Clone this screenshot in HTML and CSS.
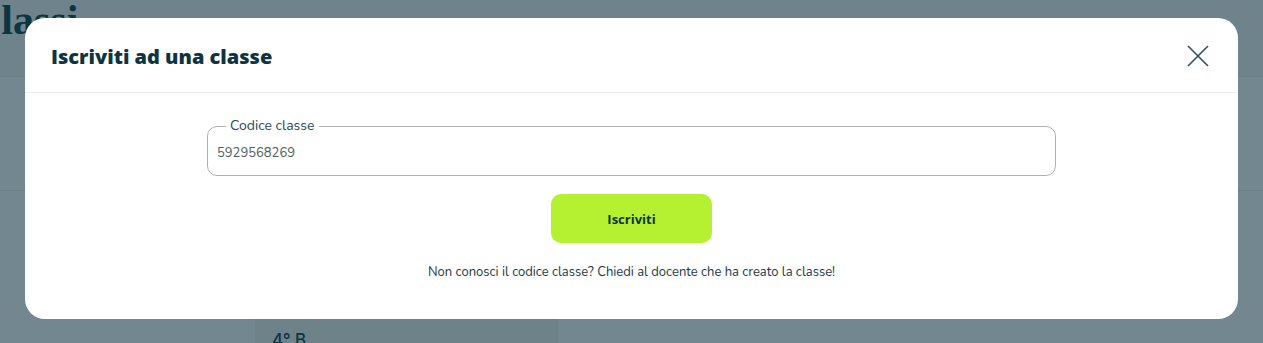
FILE: index.html
```html
<!DOCTYPE html>
<html lang="it">
<head>
<meta charset="utf-8">
<link rel="stylesheet" href="styles.css">
<title>Classi</title>
</head>
<body>
<div class="page">
  <header class="page-head">
    <h1 class="page-title">Classi</h1>
  </header>
  <div class="toolbar"></div>
  <div class="grid">
    <div class="class-card"><span class="class-name">4° B</span></div>
  </div>
</div>

<div class="modal">
  <div class="modal-head">
    <h2 class="modal-title">Iscriviti ad una classe</h2>
    <button class="close" aria-label="Chiudi">
      <svg width="24" height="24" viewBox="0 0 24 24"><path d="M2 2 L22 22 M22 2 L2 22" stroke="#2b4e5c" stroke-width="1.6" fill="none"/></svg>
    </button>
  </div>
  <div class="modal-body">
    <fieldset class="field">
      <legend class="field-label">Codice classe</legend>
      <div class="field-value">5929568269</div>
    </fieldset>
    <button class="submit">Iscriviti</button>
    <p class="help">Non conosci il codice classe? Chiedi al docente che ha creato la classe!</p>
  </div>
</div>
</body>
</html>
```
FILE: styles.css
```css
html, body {
  margin: 0;
  padding: 0;
}
body {
  background: #72878f;
  width: 1263px;
  height: 343px;
  overflow: hidden;
  position: relative;
  font-family: "Nunito", "Lato", "Noto Sans", sans-serif;
}
.page-head {
  height: 76px;
  background: #6e838b;
  border-bottom: 1px solid #6a7f87;
  overflow: hidden;
}
.page-title {
  margin: 0;
  font-family: "Liberation Serif", serif;
  font-weight: bold;
  font-size: 42px;
  color: #0d3441;
  line-height: 40px;
  margin-left: -29px;
  margin-top: 0px;
}
.toolbar {
  height: 113px;
  border-bottom: 1px solid #6a7f87;
}
.grid {
  padding: 128px 0 0 255px;
}
.class-card {
  width: 303px;
  height: 60px;
  background: #6d8289;
  box-sizing: border-box;
  padding: 11px 0 0 17px;
}
.class-name {
  font-family: "Inter", sans-serif;
  font-weight: 500;
  font-size: 17px;
  color: #0d3441;
}

.modal {
  position: absolute;
  left: 25px;
  top: 18px;
  width: 1213px;
  height: 301px;
  background: #fff;
  border-radius: 20px;
}
.modal-head {
  height: 74px;
  border-bottom: 1px solid #eef1f2;
  display: flex;
  align-items: center;
  justify-content: space-between;
  padding: 0 28px 0 26px;
}
.modal-title {
  margin: 0;
  margin-top: 2px;
  font-family: "Open Sans", sans-serif;
  font-weight: 800;
  font-size: 20px;
  color: #0d3441;
}
.close {
  border: 0;
  background: none;
  padding: 0;
  width: 24px;
  height: 24px;
  margin-top: 1px;
}
.close svg { display: block; }

.modal-body {
  display: flex;
  flex-direction: column;
  align-items: center;
  padding-top: 25px;
}
.field {
  width: 849px;
  box-sizing: border-box;
  margin: 0;
  height: 58px;
  border: 1px solid #aeb1b3;
  border-radius: 10px;
  padding: 0 9px;
}
.field-label {
  font-size: 14px;
  color: #1e4a5a;
  padding: 0 4px;
  margin-left: 9px;
  line-height: 16px;
}
.field-value {
  font-size: 13px;
  color: #4a5f68;
  margin-top: 10px;
}
.submit {
  margin-top: 18px;
  width: 161px;
  height: 49px;
  background: #b5f130;
  border: 0;
  border-radius: 10px;
  font-family: "Open Sans", sans-serif;
  font-weight: 700;
  font-size: 13px;
  color: #0d3441;
}
.help {
  margin: 20px 0 0;
  font-size: 13px;
  color: #1a3a48;
}
```
